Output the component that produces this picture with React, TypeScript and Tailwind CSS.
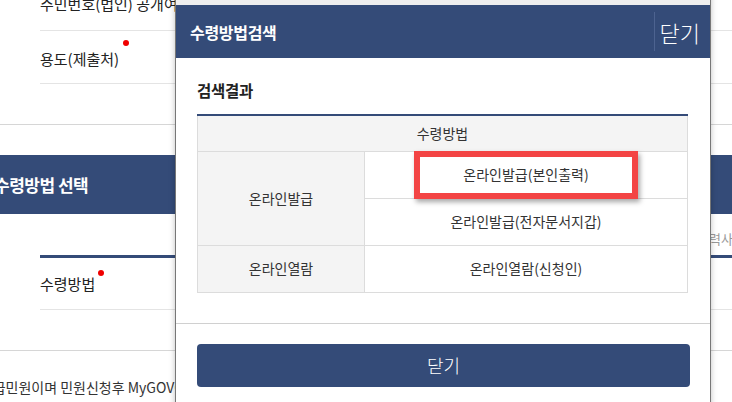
import React from 'react';

const NAVY = 'bg-[#344b78]';

const rows = [
  { group: '온라인발급', items: ['온라인발급(본인출력)', '온라인발급(전자문서지갑)'] },
  { group: '온라인열람', items: ['온라인열람(신청인)'] },
];

const Dot = () => <span className="absolute -top-[2px] -right-[9px] w-[6px] h-[6px] rounded-full bg-[#f00000]" />;

const BackgroundPage: React.FC = () => (
  <div className="w-[732px] text-[#222]">
    {/* form rows, first one scrolled off the top */}
    <div className="-mt-[22px] pl-[40px]">
      <div className="h-[53px] flex items-center border-b border-[#e4e4e4] text-[15px]">주민번호(법인) 공개여부</div>
      <div className="h-[53px] flex items-center border-b border-[#e4e4e4] text-[15px]">
        <span className="relative pt-[4px]">
          용도(제출처)
          <span className="absolute top-[-4px] -right-[10px] w-[6px] h-[6px] rounded-full bg-[#f00000]" />
        </span>
      </div>
    </div>

    <div className="mt-[40px] border-t border-[#d6d6d6] pt-[30px]">
      <div className={`${NAVY} h-[59px] flex items-center -ml-[6px]`}>
        <span className="text-white font-bold text-[17px] tracking-[-0.5px]">수령방법 선택</span>
      </div>
      <div className="h-[41px] flex items-end pb-[7px]">
        <span className="ml-[697px] whitespace-nowrap text-[13px] text-[#999]">이력사항</span>
      </div>
      <div className="ml-[40px] border-t-[3px] border-[#344b78]">
        <div className="h-[52px] flex items-center border-b border-[#e4e4e4] text-[15px]">
          <span className="relative pt-[1px]">
            수령방법
            <Dot />
          </span>
        </div>
      </div>
    </div>

    <div className="mt-[40px] border-t border-[#d6d6d6] pt-[26px]">
      <p className="-ml-[46px] whitespace-nowrap text-[14px] text-[#333]">
        즉시발급민원이며 민원신청후 MyGOV에서 확인하실 수 있습니다.
      </p>
    </div>
  </div>
);

const ResultTable: React.FC = () => (
  <table className="w-full border-collapse text-[14px] text-[#333] border-t-2 border-t-[#344b78]">
    <thead>
      <tr>
        <th colSpan={2} className="h-[36px] bg-[#f4f4f4] border border-[#dcdcdc] border-t-0 font-normal">수령방법</th>
      </tr>
    </thead>
    <tbody>
      {rows.map(r =>
        r.items.map((item, i) => (
          <tr key={item}>
            {i === 0 && (
              <td rowSpan={r.items.length} className="w-[167px] bg-[#f4f4f4] border border-[#dcdcdc] text-center">
                {r.group}
              </td>
            )}
            <td className="h-[47px] border border-[#dcdcdc] text-center">
              {i === 0 && r.group === '온라인발급' ? (
                <span className="inline-flex items-center justify-center w-[224px] h-[48px] -my-[2px] border-[6px] border-[#f34444] shadow-[2px_3px_5px_rgba(0,0,0,0.35)]">
                  {item}
                </span>
              ) : (
                item
              )}
            </td>
          </tr>
        ))
      )}
    </tbody>
  </table>
);

const Modal: React.FC = () => (
  <div className="absolute left-[175px] -top-[10px] w-[536px] h-[440px] bg-white border-x border-[#777] shadow-[0_0_6px_rgba(0,0,0,0.25)] flex flex-col">
    <div className="h-[15px] bg-[#eeeeee]" />
    <div className={`${NAVY} h-[53px] flex items-center justify-between pl-[14px]`}>
      <h2 className="text-white font-bold text-[16px] tracking-[-0.3px]">수령방법검색</h2>
      <div className="flex items-center h-full py-[7px]">
        <span className="w-px h-full bg-[#4d6390]" />
        <button className="text-white text-[22px] font-light pl-[5px] pr-[10px] leading-none">닫기</button>
      </div>
    </div>
    <div className="px-[21px] pt-[17px] pb-[30px] border-b border-[#d0d0d0]">
      <h3 className="text-[15.5px] font-bold text-[#222] leading-[30px] mb-[9px] tracking-[-0.3px]">검색결과</h3>
      <div className="pr-[1px]">
        <ResultTable />
      </div>
    </div>
    <div className="px-[21px] pt-[20px]">
      <button className={`w-[493px] h-[43px] rounded-[4px] ${NAVY} text-white text-[18px] font-light`}>닫기</button>
    </div>
  </div>
);

export default function App() {
  return (
    <div
      className="relative w-[732px] h-[402px] overflow-hidden bg-white"
      style={{ fontFamily: '"Noto Sans CJK KR", "Noto Sans", sans-serif' }}
    >
      <BackgroundPage />
      <Modal />
    </div>
  );
}
